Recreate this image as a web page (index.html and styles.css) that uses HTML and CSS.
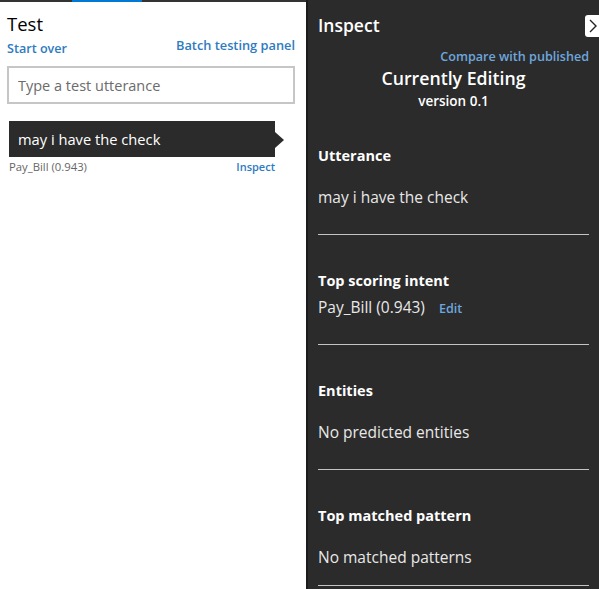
FILE: index.html
```html
<!DOCTYPE html>
<html lang="en">
<head>
    <meta charset="UTF-8">
    <meta name="viewport" content="width=device-width, initial-scale=1.0">
    <title>Test</title>
    <link rel="stylesheet" href="styles.css">
</head>
<body>

<div class="app">
    <div class="test-panel">
        <div class="tab-strip">
            <div class="tab-active"></div>
        </div>
        <div class="test-body">
            <h2 class="test-title">Test</h2>
            <div class="test-links">
                <a class="link">Start over</a>
                <a class="link link-batch">Batch testing panel</a>
            </div>
            <input class="utterance-input" type="text" placeholder="Type a test utterance">
            <div class="bubble">may i have the check</div>
            <div class="bubble-meta">
                <span class="intent">Pay_Bill (0.943)</span>
                <a class="link link-small">Inspect</a>
            </div>
        </div>
    </div>

    <div class="inspect-panel">
        <button class="close-btn">
            <svg width="12" height="14" viewBox="0 0 12 14"><path d="M3 1 L9 7 L3 13" fill="none" stroke="#222" stroke-width="1.4"/></svg>
        </button>
        <h2 class="inspect-title">Inspect</h2>
        <div class="compare"><a class="link-dark">Compare with published</a></div>
        <div class="editing">Currently Editing</div>
        <div class="version">version 0.1</div>

        <div class="section">
            <h3>Utterance</h3>
            <p>may i have the check</p>
        </div>
        <div class="section section-intent">
            <h3>Top scoring intent</h3>
            <p>Pay_Bill (0.943) <a class="link-dark edit">Edit</a></p>
        </div>
        <div class="section">
            <h3>Entities</h3>
            <p>No predicted entities</p>
        </div>
        <div class="section section-last">
            <h3>Top matched pattern</h3>
            <p>No matched patterns</p>
        </div>
    </div>
</div>

</body>
</html>
```

FILE: styles.css
```css
body {
    margin: 0;
    background-color: #2b2b2b;
    font-family: 'Open Sans', 'Noto Sans', sans-serif;
    overflow: hidden;
}
.app {
    display: grid;
    grid-template-columns: 306px 1fr;
    height: 589px;
}
.test-panel {
    background-color: #ffffff;
}
.tab-strip {
    height: 2px;
    background-color: #333333;
}
.tab-active {
    margin-left: 72px;
    width: 70px;
    height: 2px;
    background-color: #0078d4;
}
.test-body {
    padding: 10px 11px 0 7px;
}
.test-title {
    margin: 0;
    font-size: 18.5px;
    line-height: 24px;
    font-weight: 400;
    color: #000;
}
.test-links {
    display: flex;
    justify-content: space-between;
    align-items: flex-end;
    margin-top: 1px;
}
.link {
    color: #2e7bbf;
    font-size: 12.6px;
    line-height: 16px;
    font-weight: 600;
    cursor: pointer;
}
.link-batch {
    font-size: 12.8px;
    padding-bottom: 4px;
}
.utterance-input {
    display: block;
    box-sizing: border-box;
    width: 288px;
    height: 38px;
    margin-top: 9px;
    padding: 0 9px;
    border: 2px solid #c6c6c6;
    font-family: inherit;
    font-size: 14.5px;
    color: #333;
    outline: none;
}
.utterance-input::placeholder {
    color: #6b6b6b;
}
.bubble {
    position: relative;
    margin: 17px 0 0 2px;
    width: 266px;
    box-sizing: border-box;
    height: 36px;
    padding-left: 9px;
    background-color: #2b2b2b;
    color: #ffffff;
    font-size: 14.7px;
    line-height: 36px;
}
.bubble::after {
    content: '';
    position: absolute;
    right: -9px;
    top: 11px;
    border-left: 9px solid #2b2b2b;
    border-top: 8px solid transparent;
    border-bottom: 8px solid transparent;
}
.bubble-meta {
    display: flex;
    justify-content: space-between;
    width: 266px;
    margin: 2px 0 0 2px;
}
.intent {
    font-size: 11.3px;
    line-height: 16px;
    color: #666666;
}
.link-small {
    font-size: 11px;
}
.inspect-panel {
    position: relative;
    background-color: #2b2b2b;
    border-left: 2px solid #1c1c1c;
    padding: 13px 10px 0 10px;
    color: #ffffff;
}
.close-btn {
    position: absolute;
    top: 15px;
    right: -8px;
    width: 22px;
    height: 22px;
    padding: 0 0 0 2px;
    background-color: #ffffff;
    border: none;
    border-radius: 3px;
    display: flex;
    align-items: center;
}
.inspect-title {
    margin: 0;
    font-size: 17.5px;
    line-height: 24px;
    font-weight: 600;
}
.compare {
    margin-top: 10px;
    text-align: right;
    line-height: 16px;
}
.link-dark {
    color: #6ea7dd;
    font-size: 12.6px;
    line-height: 16px;
    font-weight: 600;
    cursor: pointer;
}
.editing {
    margin-top: 1px;
    text-align: center;
    font-size: 17.7px;
    line-height: 24px;
    font-weight: 600;
}
.version {
    margin-top: 2px;
    text-align: center;
    font-size: 13.5px;
    line-height: 18px;
    font-weight: 600;
}
.section {
    border-bottom: 1px solid #c4c4c4;
    padding-bottom: 27px;
    margin-top: 36px;
}
.section:first-of-type {
    margin-top: 37px;
}
.section h3 {
    margin: 0;
    font-size: 14.5px;
    line-height: 20px;
    font-weight: 700;
}
.section p {
    margin: 21px 0 0 0;
    font-size: 15.5px;
    line-height: 20px;
    color: #e8e8e8;
}
.section-intent p {
    margin-top: 6px;
}
.edit {
    margin-left: 10px;
}
.section-last {
    padding-bottom: 18px;
}
```
